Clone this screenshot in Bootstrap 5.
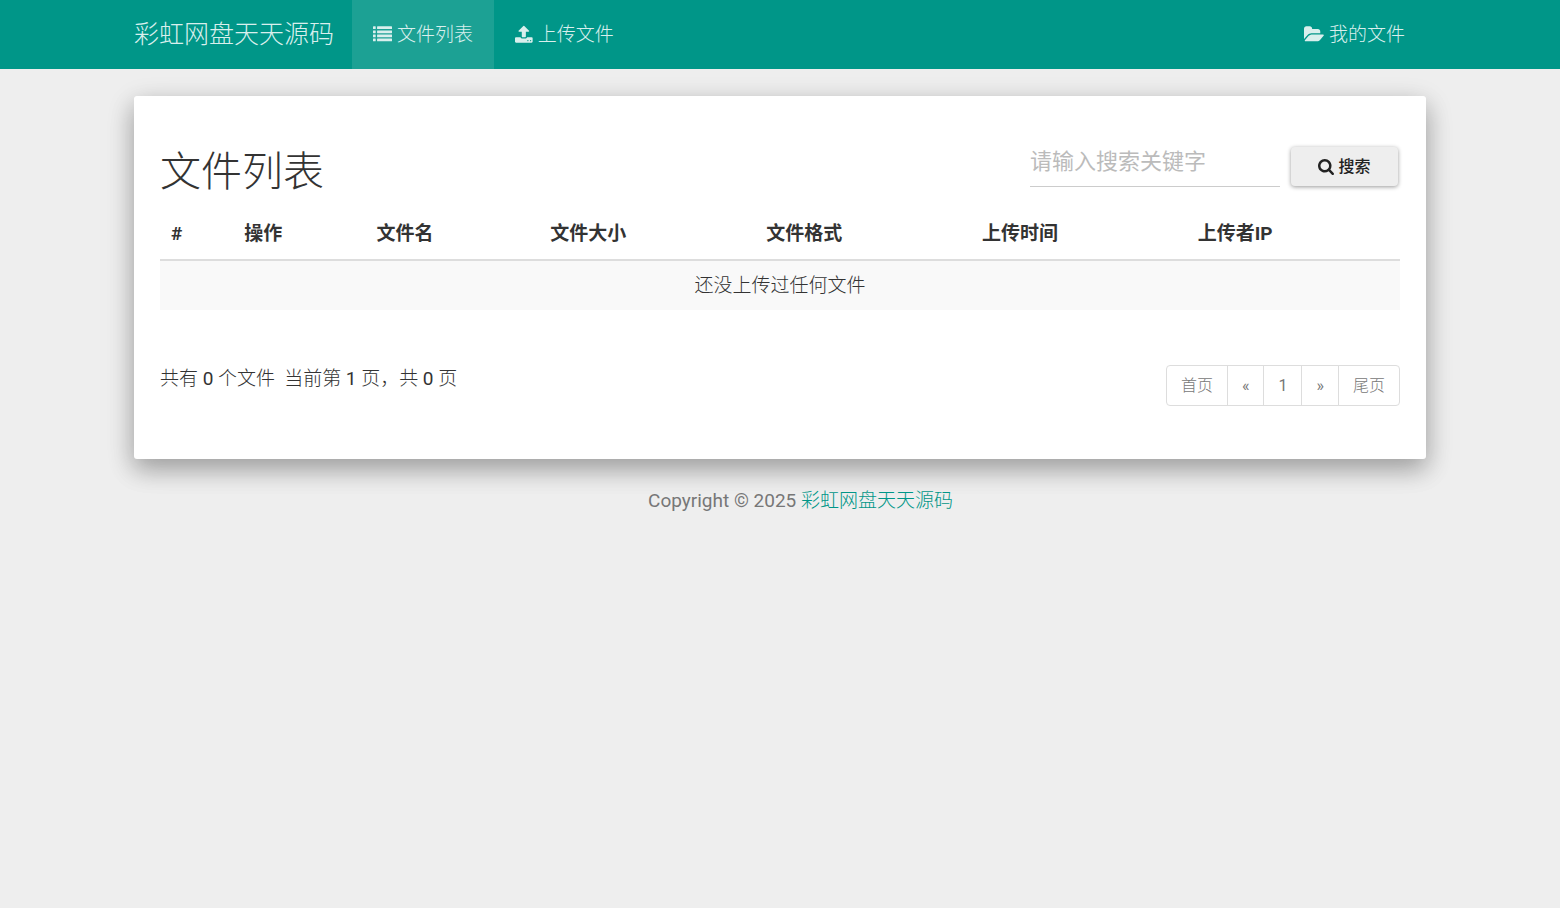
<!DOCTYPE html>
<html lang="zh-CN">
<head>
<meta charset="utf-8">
<meta name="viewport" content="width=device-width, initial-scale=1">
<title>文件列表 - 彩虹网盘天天源码</title>
<link href="https://cdn.jsdelivr.net/npm/bootstrap@5.3.0/dist/css/bootstrap.min.css" rel="stylesheet">
<style>
  body { background: #eee; color: #333; font: 300 19px/27px Roboto, "Noto Sans CJK SC", sans-serif; }
  .page-width { width: 100%; max-width: 1292px; margin-inline: auto; }
  .topbar { background: #009688; }
  .topbar .navbar-brand { font-size: 25px; line-height: 27px; padding: 21px 18px 21px 0; margin: 0; color: #d9efed; }
  .topbar .navbar-nav .nav-link { padding: 21px; color: #d9efed; display: flex; align-items: center; gap: 5px; }
  .topbar .navbar-nav .nav-link.active { background: #1ca194; color: #d9efed; }
  .topbar .navbar-nav .nav-link:hover { color: #fff; }
  .glyph { height: 19px; fill: currentColor; flex: none; }
  .panel { background: #fff; border-radius: 3px; margin-top: 27px; padding: 49px 26px 53px;
    box-shadow: 0 11px 24px rgba(0,0,0,.2), 0 8px 28px rgba(0,0,0,.19); }
  .panel h1 { font-size: 41px; line-height: 55px; font-weight: 300; margin: 0; }
  .search-form { gap: 11px; }
  .search-box { width: 250px; height: 42px; border: 0; border-bottom: 1px solid #ccc; border-radius: 0;
    padding: 0 0 8px; font-size: 22px; line-height: 33px; font-weight: 400; background: transparent; }
  .search-box::placeholder { color: #bbb; }
  .search-btn { width: 107px; height: 39px; margin: 2px 2px 0 0; padding: 0; background: #eee; color: #222; border: 0; border-radius: 4px;
    font-size: 16px; font-weight: 500; box-shadow: 0 1px 4px rgba(0,0,0,.4); }
  .search-btn .glyph { height: 16px; }
  .file-table { margin: 9px 0 0; --bs-table-bg: transparent; --bs-table-striped-bg: #f9f9f9; --bs-table-color: #333; --bs-table-striped-color: #333; }
  .file-table > :not(caption) > * > * { padding: 11px; border: 0; }
  .file-table > thead > tr > th { border-bottom: 2px solid #ddd; font-weight: 700; padding-bottom: 12px; }
  .figure-text { font-weight: 400; }
  .list-foot { padding-top: 55px; }
  .pagination { --bs-pagination-color: #777; --bs-pagination-border-color: #ddd; --bs-pagination-font-size: 16px; --bs-pagination-padding-x: 14px; --bs-pagination-padding-y: 7px; --bs-pagination-border-radius: 4px; line-height: 25px; }
  .site-footer { color: #777; padding: 28px 0 28px 41px; }
  .site-footer a { color: #009688; text-decoration: none; }
</style>
</head>
<body>
<nav class="navbar navbar-expand topbar p-0">
  <div class="page-width d-flex">
    <a class="navbar-brand" href="#">彩虹网盘天天源码</a>
    <ul class="navbar-nav flex-grow-1">
      <li class="nav-item"><a class="nav-link active" aria-current="page" href="#">
        <svg class="glyph" viewBox="0 0 1792 1792" aria-hidden="true"><rect y="128" width="256" height="256" rx="32"/><rect y="512" width="256" height="256" rx="32"/><rect y="896" width="256" height="256" rx="32"/><rect y="1280" width="256" height="256" rx="32"/><rect x="384" y="128" width="1408" height="256" rx="32"/><rect x="384" y="512" width="1408" height="256" rx="32"/><rect x="384" y="896" width="1408" height="256" rx="32"/><rect x="384" y="1280" width="1408" height="256" rx="32"/></svg><span>文件列表</span></a></li>
      <li class="nav-item"><a class="nav-link" href="#">
        <svg class="glyph" viewBox="64 0 1664 1792" aria-hidden="true"><path d="M1344 1472q0-26-19-45t-45-19-45 19-19 45 19 45 45 19 45-19 19-45zm256 0q0-26-19-45t-45-19-45 19-19 45 19 45 45 19 45-19 19-45zm128-224v320q0 40-28 68t-68 28h-1472q-40 0-68-28t-28-68v-320q0-40 28-68t68-28h427q21 56 70.5 92t110.5 36h256q61 0 110.5-36t70.5-92h427q40 0 68 28t28 68zm-325-648q-17 40-59 40h-256v448q0 26-19 45t-45 19h-256q-26 0-45-19t-19-45v-448h-256q-42 0-59-40-17-39 14-69l448-448q18-19 45-19t45 19l448 448q31 30 14 69z"/></svg><span>上传文件</span></a></li>
      <li class="nav-item ms-auto"><a class="nav-link" href="#">
        <svg class="glyph" viewBox="0 0 1920 1792" aria-hidden="true"><path d="M1879 952q0 31-31 66l-336 396q-43 51-120.5 86.5t-143.5 35.5h-1088q-34 0-60.5-13t-26.5-43q0-31 31-66l336-396q43-51 120.5-86.5t143.5-35.5h1088q34 0 60.5 13t26.5 43zm-343-344v160h-832q-94 0-197 47.5t-164 119.5l-337 396-5 6q0-4-.5-12.5t-.5-12.5v-960q0-92 66-158t158-66h320q92 0 158 66t66 158v32h544q92 0 158 66t66 158z"/></svg><span>我的文件</span></a></li>
    </ul>
  </div>
</nav>
<main class="page-width panel">
  <div class="d-flex justify-content-between">
    <h1>文件列表</h1>
    <form class="search-form d-flex align-items-start" role="search">
      <input class="form-control search-box" type="text" aria-label="搜索关键字" placeholder="请输入搜索关键字">
      <button class="btn search-btn d-flex align-items-center justify-content-center gap-1" type="submit">
        <svg class="glyph" viewBox="64 128 1664 1664" aria-hidden="true"><path d="M1216 832q0-185-131.5-316.5t-316.5-131.5-316.5 131.5-131.5 316.5 131.5 316.5 316.5 131.5 316.5-131.5 131.5-316.5zm512 832q0 52-38 90t-90 38q-54 0-90-38l-343-342q-179 124-399 124-143 0-273.5-55.5t-225-150-150-225-55.5-273.5 55.5-273.5 150-225 225-150 273.5-55.5 273.5 55.5 225 150 150 225 55.5 273.5q0 220-124 399l343 343q37 37 37 90z"/></svg><span>搜索</span></button>
    </form>
  </div>
  <table class="table table-striped file-table">
    <thead><tr><th>#</th><th>操作</th><th>文件名</th><th>文件大小</th><th>文件格式</th><th>上传时间</th><th>上传者IP</th></tr></thead>
    <tbody><tr><td colspan="7" class="text-center">还没上传过任何文件</td></tr></tbody>
  </table>
  <div class="list-foot d-flex justify-content-between">
    <div>共有 <span class="figure-text">0</span> 个文件&nbsp; 当前第 <span class="figure-text">1</span> 页，共 <span class="figure-text">0</span> 页</div>
    <nav aria-label="分页">
      <ul class="pagination mb-0">
        <li class="page-item"><a class="page-link" href="#">首页</a></li>
        <li class="page-item"><a class="page-link figure-text" href="#">«</a></li>
        <li class="page-item"><a class="page-link figure-text" href="#">1</a></li>
        <li class="page-item"><a class="page-link figure-text" href="#">»</a></li>
        <li class="page-item"><a class="page-link" href="#">尾页</a></li>
      </ul>
    </nav>
  </div>
</main>
<footer class="site-footer text-center"><span class="figure-text">Copyright © 2025</span> <a href="#">彩虹网盘天天源码</a></footer>
<script src="https://cdn.jsdelivr.net/npm/bootstrap@5.3.0/dist/js/bootstrap.bundle.min.js"></script>
</body>
</html>
